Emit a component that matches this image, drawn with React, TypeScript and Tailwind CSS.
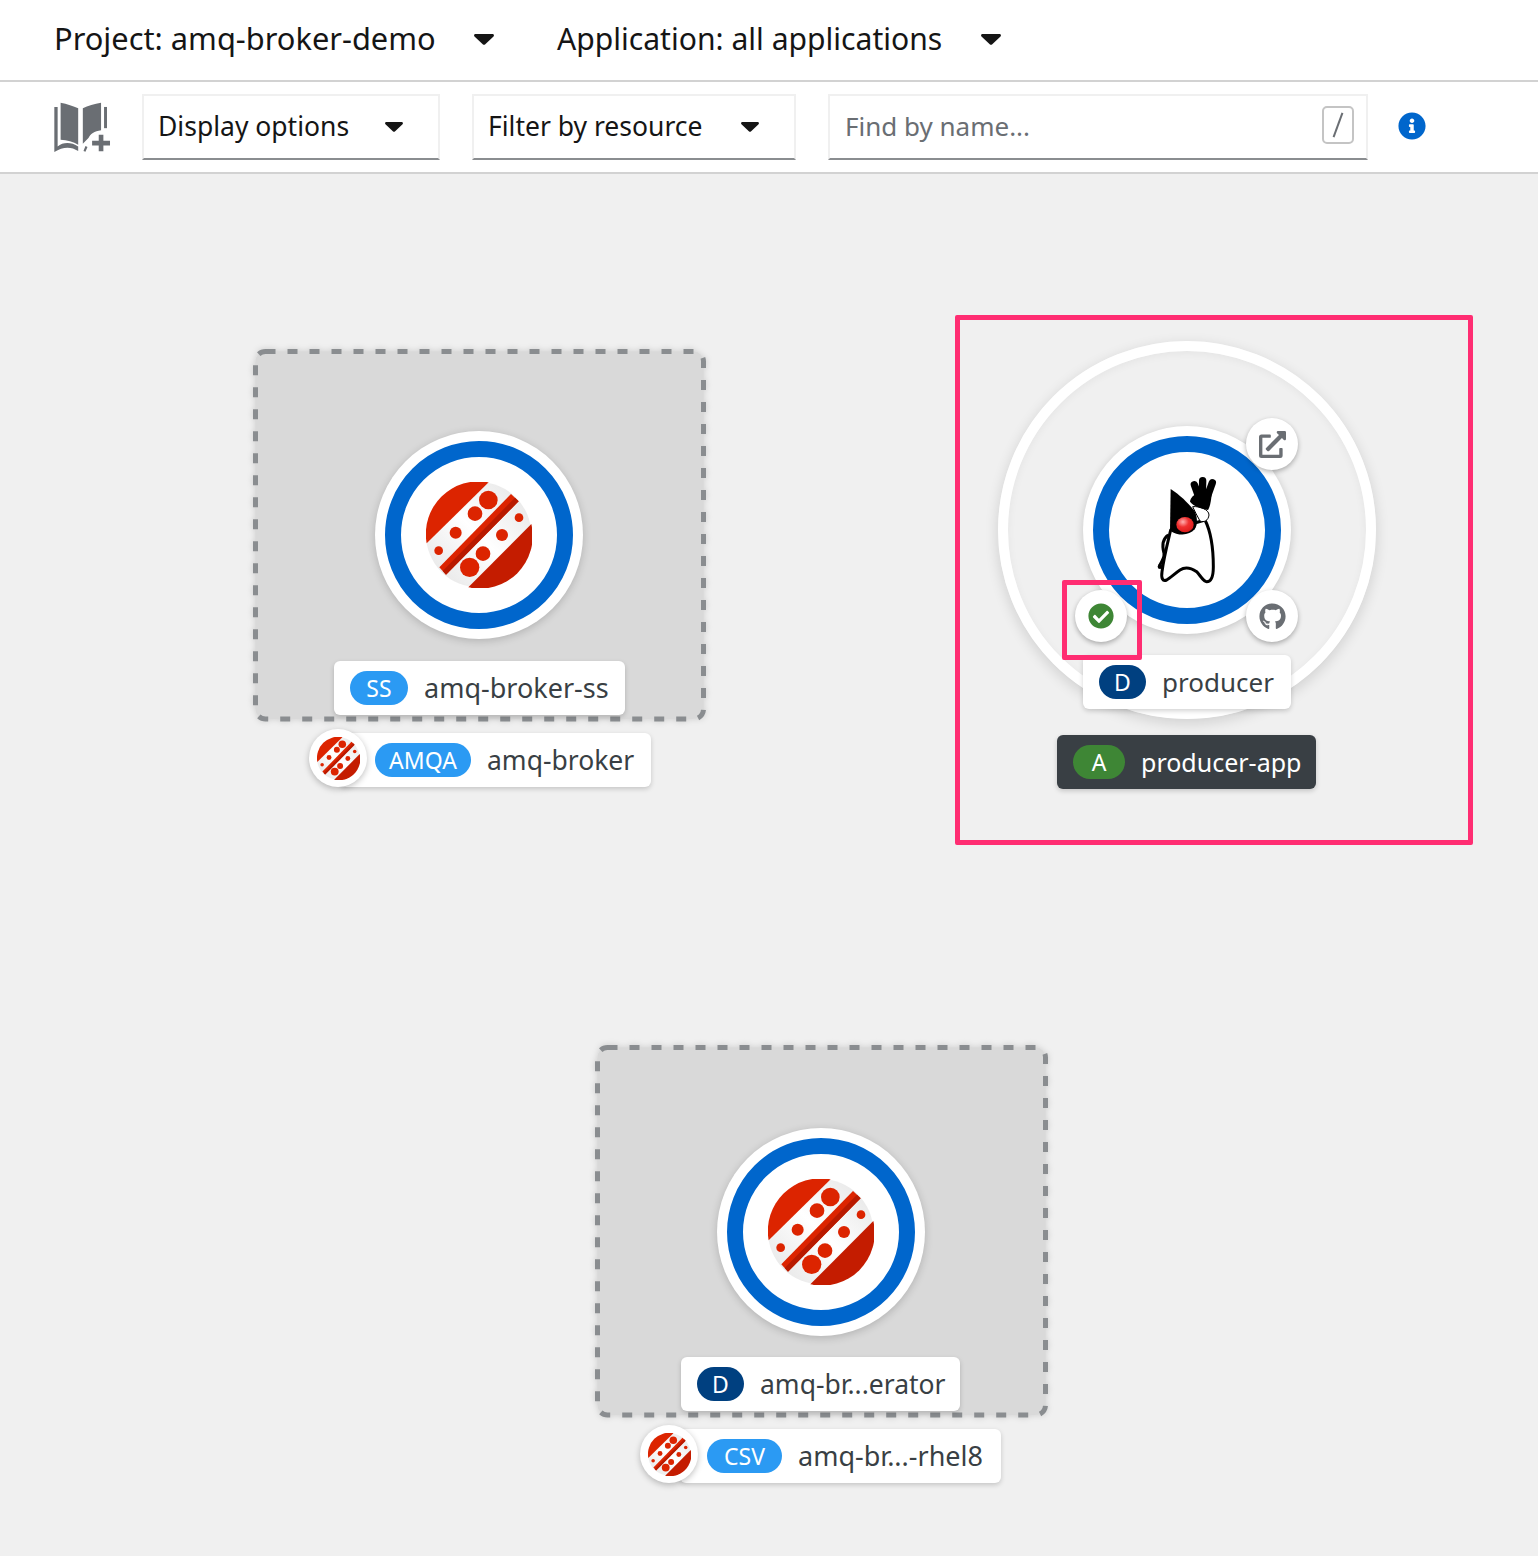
import { FaCheckCircle, FaExternalLinkAlt, FaGithub, FaInfoCircle } from "react-icons/fa";

const FONT = "font-['Noto_Sans','Open_Sans',sans-serif]";

function AmqLogo({ className }: { className: string }) {
  return (
    <svg viewBox="170 174 318 318" className={className}>
      <defs>
        <linearGradient id="amq-band" gradientUnits="userSpaceOnUse" x1="190" y1="470" x2="466" y2="194">
          <stop offset="0" stopColor="#e6e6e6" />
          <stop offset="0.5" stopColor="#ffffff" />
          <stop offset="1" stopColor="#e6e6e6" />
        </linearGradient>
      </defs>
      <circle cx="328" cy="332" r="158" fill="url(#amq-band)" />
      <path d="M172 358A158 158 0 0 1 358 175Z" fill="#dc2400" />
      <path d="M297 490A158 158 0 0 0 486 300Z" fill="#c41c00" />
      <path d="M210 430L425 210L448 232L230 452Z" fill="#dc2400" />
      <path d="M220 441L437 221L448 232L230 452Z" fill="#b81a00" />
      <circle cx="357" cy="228" r="28" fill="#dc2400" />
      <circle cx="317" cy="269" r="22" fill="#dc2400" />
      <circle cx="259" cy="326" r="18" fill="#dc2400" />
      <circle cx="208" cy="380" r="13" fill="#dc2400" />
      <circle cx="301" cy="430" r="29" fill="#dc2400" />
      <circle cx="341" cy="389" r="22" fill="#dc2400" />
      <circle cx="398" cy="333" r="18" fill="#dc2400" />
      <circle cx="449" cy="281" r="13" fill="#dc2400" />
    </svg>
  );
}

function DukeLogo() {
  return (
    <svg viewBox="0 0 225 360" className="w-[75px] h-[120px] shrink-0">
      <defs>
        <radialGradient id="duke-nose" cx="0.38" cy="0.32" r="0.75">
          <stop offset="0" stopColor="#ffb0b0" />
          <stop offset="0.45" stopColor="#f03030" />
          <stop offset="1" stopColor="#d81818" />
        </radialGradient>
      </defs>
      <path
        d="M165 150C185 190 190 240 190 290C190 320 185 335 170 335C160 335 150 315 140 305C125 295 105 290 90 300C75 310 60 325 50 330C38 335 33 325 36 305C42 260 55 210 62 180Z"
        fill="#fff"
        stroke="#000"
        strokeWidth="9"
        strokeLinejoin="round"
      />
      <path d="M55 195C40 205 35 225 42 250C44 262 36 275 28 288" fill="none" stroke="#000" strokeWidth="9" />
      <circle cx="30" cy="290" r="7" fill="#000" />
      <path d="M62 57C90 75 118 102 135 125C143 145 143 165 134 178C118 196 88 200 60 182Z" fill="#000" />
      <ellipse cx="105" cy="164" rx="26" ry="23" fill="url(#duke-nose)" />
      <path d="M128 110C148 108 177 118 177 135C175 152 162 158 150 153C142 140 135 124 128 110Z" fill="#fff" stroke="#000" strokeWidth="3" />
      <path d="M146 80L133 44M157 75L158 32M172 80L187 38" stroke="#000" strokeWidth="22" strokeLinecap="round" fill="none" />
      <path d="M120 95C122 68 175 56 186 60C184 85 182 108 174 120C152 116 130 108 120 95Z" fill="#000" />
    </svg>
  );
}

function BookIcon() {
  return (
    <svg viewBox="160 305 175 155" className="w-[58px] h-[52px] mt-[2px] text-[#6a6e73]" fill="currentColor">
      <path d="M183 306C202 310 222 316 236 323V433C222 424 202 419 183 418Z" />
      <path d="M250 323C265 315 285 310 305 306V389C285 392 272 400 267 413L250 430Z" />
      <path d="M164 319H174V438C190 424 215 424 236 438V452C215 438 190 438 164 455Z" />
      <path d="M314 319H323V383H314Z" />
      <path d="M298 403H312V421H332V435H312V453H298V435H278V421H298Z" />
      <path d="M252 452L258 437L264 440L258 454Z" />
    </svg>
  );
}

function Caret({ className }: { className: string }) {
  return (
    <svg viewBox="0 0 20 11" className={`text-[#151515] ${className}`} fill="currentColor">
      <path d="M1.5 0H18.5C19.8 0 20.4 1.5 19.5 2.4L11 10.4C10.4 11 9.6 11 9 10.4L.5 2.4C-.4 1.5.2 0 1.5 0Z" />
    </svg>
  );
}

function Dropdown({ label, width }: { label: string; width: string }) {
  return (
    <div className={`flex items-center justify-between h-[66px] pl-[14px] pr-[35px] border-2 border-[#f0f0f0] border-b-[#8a8d90] text-[26.5px] text-[#151515] ${width}`}>
      <span>{label}</span>
      <Caret className="w-[18px] h-[10px]" />
    </div>
  );
}

function Badge({ text, color, width }: { text: string; color: string; width: string }) {
  return (
    <span className={`flex items-center justify-center shrink-0 h-[34px] rounded-full text-white text-[23px] ${color} ${width}`}>
      {text}
    </span>
  );
}

function NodeLabel({ pos, badge, color, badgeWidth, name, dark, textSize }: {
  pos: string;
  badge: string;
  color: string;
  badgeWidth: string;
  name: string;
  dark?: boolean;
  textSize?: string;
}) {
  return (
    <div
      className={`absolute flex items-center gap-4 h-[54px] px-4 rounded-md shadow-[0_2px_5px_rgba(0,0,0,0.18)] whitespace-nowrap ${textSize ?? "text-[26.5px]"} ${
        dark ? "bg-[#393f44] text-white" : "bg-white text-[#393f44]"
      } ${pos}`}
    >
      <Badge text={badge} color={color} width={badgeWidth} />
      <span className="pt-[1px]">{name}</span>
    </div>
  );
}

function Workload({ pos, children }: { pos: string; children: React.ReactNode }) {
  return (
    <div className={`absolute w-[208px] h-[208px] rounded-full bg-white flex items-center justify-center shadow-[0_2px_8px_rgba(0,0,0,0.18)] ${pos}`}>
      <div className="w-[188px] h-[188px] rounded-full bg-white border-[16px] border-[#06c] flex items-center justify-center">
        {children}
      </div>
    </div>
  );
}

function Decorator({ pos, children }: { pos: string; children: React.ReactNode }) {
  return (
    <div className={`absolute w-[52px] h-[52px] rounded-full bg-white flex items-center justify-center shadow-[0_2px_5px_rgba(0,0,0,0.3)] ${pos}`}>
      {children}
    </div>
  );
}

function GroupBox({ className }: { className: string }) {
  return (
    <svg className={`absolute w-[456px] h-[376px] drop-shadow-[0_0_3px_rgba(0,0,0,0.15)] ${className}`} viewBox="0 0 456 376">
      <rect x="2.5" y="2.5" width="448" height="367.5" rx="10" fill="#d9d9d9" stroke="#8a8d90" strokeWidth="5" strokeDasharray="10 12" />
    </svg>
  );
}

function SmallLogo({ pos }: { pos: string }) {
  return (
    <div className={`absolute w-[58px] h-[58px] rounded-full bg-white flex items-center justify-center shadow-[0_2px_6px_rgba(0,0,0,0.25)] ${pos}`}>
      <AmqLogo className="w-[43px] h-[43px]" />
    </div>
  );
}

export default function App() {
  return (
    <div className={`w-[1538px] h-[1556px] bg-white flex flex-col overflow-hidden ${FONT}`}>
      <header className="h-[82px] shrink-0 border-b-2 border-[#d2d2d2] flex items-center pl-[54px] pb-[2px] text-[#151515]">
        <span className="w-[420px] pb-[2px] text-[30.8px]">Project: amq-broker-demo</span>
        <Caret className="w-[20px] h-[11px]" />
        <span className="w-[424px] ml-[63px] text-[30.1px]">Application: all applications</span>
        <Caret className="w-[20px] h-[11px]" />
      </header>

      <div className="h-[92px] shrink-0 border-b-2 border-[#d2d2d2] flex items-center pl-[53px]">
        <div className="w-[89px]">
          <BookIcon />
        </div>
        <Dropdown label="Display options" width="w-[298px]" />
        <div className="w-[32px]" />
        <Dropdown label="Filter by resource" width="w-[324px]" />
        <div className="w-[32px]" />
        <div className="flex items-center justify-between w-[540px] h-[66px] pl-[15px] pr-[12px] border-2 border-[#f0f0f0] border-b-[#8a8d90] text-[26px] text-[#6a6e73]">
          <span className="pb-[2px]">Find by name...</span>
          <span className="flex items-center justify-center w-[32px] h-[38px] mb-[4px] rounded-[5px] border-2 border-[#c4c4c4]">
            <span className="block w-[2px] h-[26px] bg-[#6a6e73] rotate-[20deg]" />
          </span>
        </div>
        <FaInfoCircle className="ml-[30px] mb-[2px] w-[28px] h-[28px] text-[#06c]" />
      </div>

      <main className="relative flex-1 bg-[#f0f0f0]">
        <GroupBox className="left-[253px] top-[175px]" />
        <Workload pos="left-[375px] top-[257px]">
          <AmqLogo className="w-[106px] h-[106px]" />
        </Workload>
        <NodeLabel pos="left-[334px] top-[487px] w-[291px]" badge="SS" color="bg-[#2b9af3]" badgeWidth="w-[58px]" name="amq-broker-ss" textSize="text-[27px]" />
        <div className="absolute left-[340px] top-[559px] w-[311px] h-[54px] rounded-md bg-white shadow-[0_2px_5px_rgba(0,0,0,0.18)]" />
        <NodeLabel pos="left-[359px] top-[559px] !shadow-none !bg-transparent" badge="AMQA" color="bg-[#2b9af3]" badgeWidth="w-[96px]" name="amq-broker" />
        <SmallLogo pos="left-[309px] top-[555px]" />

        <div className="absolute left-[998px] top-[167px] w-[378px] h-[378px] rounded-full border-[10px] border-white shadow-[0_4px_14px_rgba(0,0,0,0.14),inset_0_2px_8px_rgba(0,0,0,0.05)]" />
        <Workload pos="left-[1083px] top-[252px]">
          <DukeLogo />
        </Workload>
        <Decorator pos="left-[1246px] top-[244px]">
          <FaExternalLinkAlt className="w-[27px] h-[27px] text-[#6a6e73]" />
        </Decorator>
        <Decorator pos="left-[1246px] top-[416px]">
          <FaGithub className="w-[27px] h-[27px] text-[#6a6e73]" />
        </Decorator>
        <Decorator pos="left-[1075px] top-[416px]">
          <FaCheckCircle className="w-[26px] h-[26px] text-[#3e8635]" />
        </Decorator>
        <NodeLabel pos="left-[1083px] top-[481px] w-[208px]" badge="D" color="bg-[#004080]" badgeWidth="w-[47px]" name="producer" textSize="text-[26px]" />
        <NodeLabel pos="left-[1057px] top-[561px] w-[259px]" badge="A" color="bg-[#3e8635]" badgeWidth="w-[52px]" name="producer-app" dark textSize="text-[25px]" />
        <div className="absolute left-[955px] top-[141px] w-[518px] h-[530px] rounded-[2px] border-[5px] border-[#ff2d72]" />
        <div className="absolute left-[1062px] top-[406px] w-[80px] h-[80px] rounded-[2px] border-[5px] border-[#ff2d72]" />

        <GroupBox className="left-[595px] top-[871px]" />
        <Workload pos="left-[717px] top-[954px]">
          <AmqLogo className="w-[106px] h-[106px]" />
        </Workload>
        <NodeLabel pos="left-[681px] top-[1183px] w-[279px]" badge="D" color="bg-[#004080]" badgeWidth="w-[47px]" name="amq-br...erator" />
        <div className="absolute left-[680px] top-[1255px] w-[321px] h-[54px] rounded-md bg-white shadow-[0_2px_5px_rgba(0,0,0,0.18)]" />
        <NodeLabel pos="left-[691px] top-[1255px] !shadow-none !bg-transparent" badge="CSV" color="bg-[#2b9af3]" badgeWidth="w-[75px]" name="amq-br...-rhel8" textSize="text-[27px]" />
        <SmallLogo pos="left-[640px] top-[1251px]" />
      </main>
    </div>
  );
}
